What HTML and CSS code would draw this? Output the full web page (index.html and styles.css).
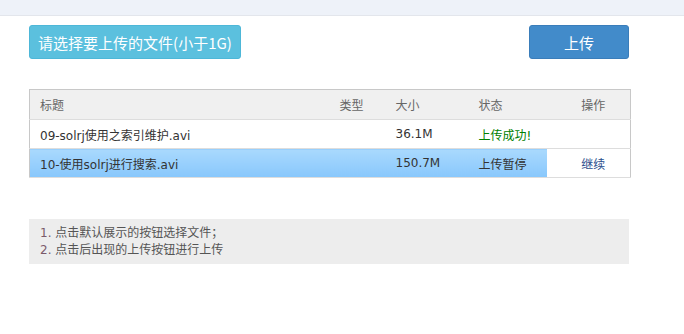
FILE: index.html
```html
<!DOCTYPE html>
<html lang="zh-CN">
<head>
    <meta charset="UTF-8">
    <title>文件上传</title>
    <link rel="stylesheet" href="styles.css">
</head>
<body>
    <div class="topbar"></div>

    <div class="container">
        <div class="actions">
            <button class="btn btn-pick">请选择要上传的文件(小于1G)</button>
            <button class="btn btn-upload">上传</button>
        </div>

        <table class="files">
            <colgroup>
                <col class="c-title">
                <col class="c-type">
                <col class="c-size">
                <col class="c-status">
                <col class="c-op">
            </colgroup>
            <thead>
                <tr>
                    <th>标题</th>
                    <th>类型</th>
                    <th>大小</th>
                    <th>状态</th>
                    <th class="op">操作</th>
                </tr>
            </thead>
            <tbody>
                <tr>
                    <td>09-solrj使用之索引维护.avi</td>
                    <td></td>
                    <td>36.1M</td>
                    <td class="ok">上传成功!</td>
                    <td class="op"></td>
                </tr>
                <tr class="active">
                    <td>10-使用solrj进行搜索.avi</td>
                    <td></td>
                    <td>150.7M</td>
                    <td>上传暂停</td>
                    <td class="op"><a href="#">继续</a></td>
                </tr>
            </tbody>
        </table>

        <div class="tips">
            <p><span class="num">1.</span> 点击默认展示的按钮选择文件；</p>
            <p><span class="num">2.</span> 点击后出现的上传按钮进行上传</p>
        </div>
    </div>
</body>
</html>
```

FILE: styles.css
```css
body {
    margin: 0;
    font-family: "Noto Sans CJK SC", "DejaVu Sans", sans-serif;
    background-color: #fff;
    color: #333;
}
.topbar {
    height: 15px;
    background-color: #eef2f9;
    border-bottom: 1px solid #e3e6ec;
}
.container {
    width: 602px;
    margin-left: 29px;
}
.actions {
    display: flex;
    justify-content: space-between;
    margin-top: 9px;
}
.btn {
    height: 34px;
    border-radius: 3px;
    color: #fff;
    font-family: inherit;
    font-size: 15px;
    cursor: pointer;
    padding: 0;
}
.btn-pick {
    width: 212px;
    background-color: #5bc0de;
    border: 1px solid #4db7d8;
}
.btn-upload {
    width: 100px;
    margin-right: 2px;
    background-color: #428bca;
    border: 1px solid #3a7dba;
}
.files {
    width: 601px;
    margin-top: 30px;
    border-collapse: collapse;
    table-layout: fixed;
    border: 1px solid #c8c8c8;
    font-family: "DejaVu Sans", "Noto Sans CJK SC", sans-serif;
    font-size: 12px;
}
.c-title { width: 300px; }
.c-type { width: 56px; }
.c-size { width: 83px; }
.c-status { width: 78px; }
.c-op { width: 84px; }
.files th {
    height: 29px;
    padding: 0 0 0 10px;
    text-align: left;
    font-weight: normal;
    color: #666;
    background-color: #f0f0f0;
    border-bottom: 1px solid #ddd;
}
.files td {
    height: 28px;
    padding: 0 0 0 10px;
    border-bottom: 1px solid #ddd;
    white-space: nowrap;
}
.files .op {
    text-align: center;
    padding-left: 10px;
}
.files .ok {
    color: #008000;
}
.files tr.active td {
    background: linear-gradient(#a9d9fd, #88c7fc);
    color: #333;
}
.files tr.active td.op {
    background: #fff;
}
.files td.op a {
    color: #2a4d8c;
    text-decoration: none;
}
.tips {
    margin-top: 41px;
    width: 600px;
    padding: 6px 0 5px 11px;
    box-sizing: border-box;
    background-color: #ededed;
    font-family: "DejaVu Sans", "Noto Sans CJK SC", sans-serif;
    font-size: 12px;
    color: #555;
}
.tips p {
    margin: 0;
    line-height: 17px;
}
.tips .num {
    color: #7a5a6a;
}
```
